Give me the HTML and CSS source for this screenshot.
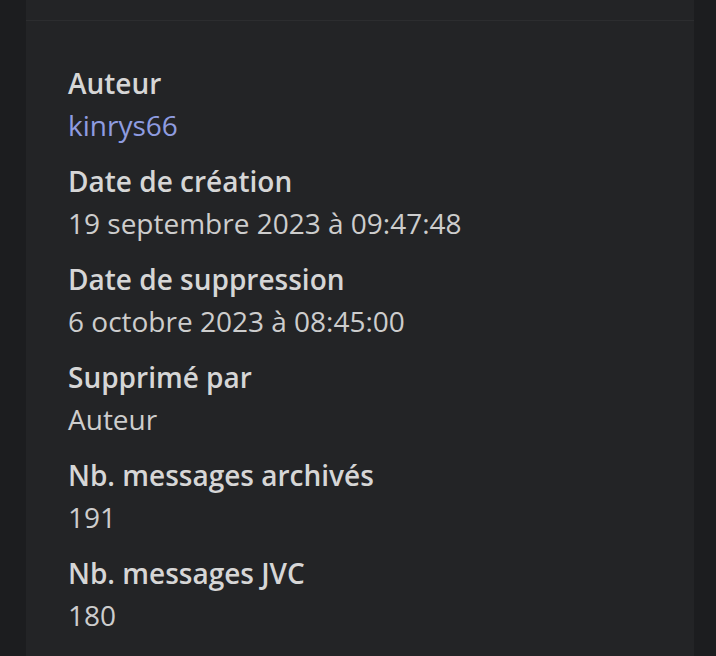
FILE: index.html
```html
<!DOCTYPE html>
<html lang="fr">
<head>
<meta charset="utf-8">
<title>Informations</title>
<link rel="stylesheet" href="styles.css">
</head>
<body>
<div class="page">
  <section class="card">
    <div class="card-header"></div>
    <dl class="card-body">
      <div class="item">
        <dt>Auteur</dt>
        <dd><a class="link" href="#">kinrys66</a></dd>
      </div>
      <div class="item">
        <dt>Date de création</dt>
        <dd>19 septembre 2023 à 09:47:48</dd>
      </div>
      <div class="item">
        <dt>Date de suppression</dt>
        <dd>6 octobre 2023 à 08:45:00</dd>
      </div>
      <div class="item">
        <dt>Supprimé par</dt>
        <dd>Auteur</dd>
      </div>
      <div class="item">
        <dt>Nb. messages archivés</dt>
        <dd>191</dd>
      </div>
      <div class="item">
        <dt>Nb. messages JVC</dt>
        <dd>180</dd>
      </div>
    </dl>
  </section>
</div>
</body>
</html>
```
FILE: styles.css
```css
html, body {
  margin: 0;
  padding: 0;
  background: #1c1d1f;
  font-family: "Open Sans", "Noto Sans", sans-serif;
}
.page {
  padding: 0 22px 0 26px;
  height: 656px;
  overflow: hidden;
}
.card {
  background: #232426;
  min-height: 656px;
}
.card-header {
  height: 20px;
  border-bottom: 1px solid #2c2d2f;
}
.card-body {
  margin: 0;
  padding: 41px 42px;
  display: flex;
  flex-direction: column;
  gap: 14px;
}
.item dt {
  font-size: 28px;
  line-height: 42px;
  font-weight: 600;
  color: #d6d6d6;
}
.item dd {
  margin: 0;
  font-size: 28px;
  line-height: 42px;
  font-weight: 400;
  color: #cdcdcd;
}
.link {
  color: #8f9ce0;
  text-decoration: none;
}
```
